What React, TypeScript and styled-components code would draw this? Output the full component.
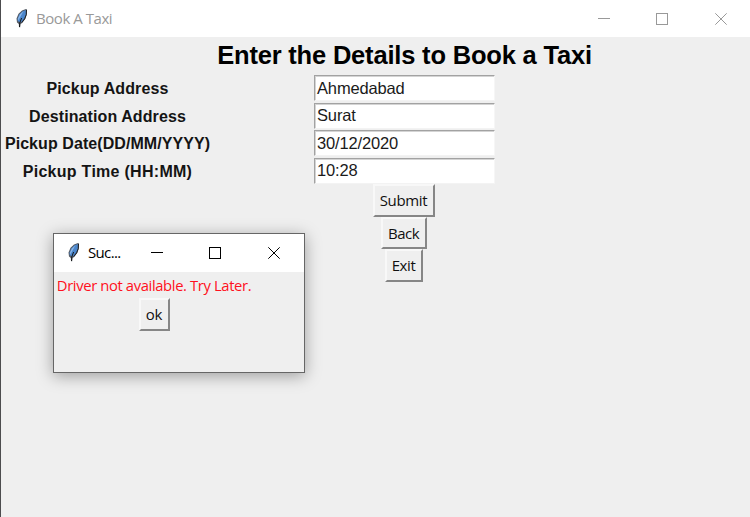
import React from "react";
import styled, { createGlobalStyle } from "styled-components";

const GlobalStyle = createGlobalStyle`
  * { box-sizing: border-box; }
  html, body { margin: 0; padding: 0; overflow: hidden; background: #efefef; }
`;

const arial = `"Liberation Sans", Arial, sans-serif`;
const ui = `"Open Sans", "Noto Sans", sans-serif`;

const Window = styled.main`
  position: relative;
  width: 750px;
  height: 517px;
  border-left: 1px solid #4c4c4e;
  background: #efefef;
`;

const TitleBar = styled.header<{ $height: number; $active?: boolean }>`
  display: flex;
  align-items: center;
  height: ${(p) => p.$height}px;
  padding-left: ${(p) => (p.$active ? 11 : 12)}px;
  padding-right: ${(p) => (p.$active ? 24 : 23)}px;
  background: #fff;
  color: ${(p) => (p.$active ? "#000" : "#999")};
`;

const Caption = styled.h1<{ $spacing: number }>`
  flex: 1;
  margin: -2px 0 0 7px;
  font: 400 15px/20px ${ui};
  letter-spacing: ${(p) => p.$spacing}px;
  white-space: nowrap;
`;

const Controls = styled.div`
  display: flex;
  gap: 46px;

  & > :last-child { margin-left: 1px; }
`;

const Glyph = styled.svg`
  display: block;
  width: 12px;
  height: 12px;
`;

const Feather = styled.svg`
  display: block;
  width: 16px;
  height: 20px;
  margin-top: -2px;
`;

const Form = styled.form`
  display: grid;
  grid-template-columns: 213px 381px;
  grid-template-rows: 38px repeat(4, 27.5px) auto;
`;

const Heading = styled.h2`
  grid-column: 2;
  justify-self: center;
  margin: -1px 0 0;
  font: 700 25.5px/38px ${arial};
  letter-spacing: -0.19px;
  color: #000;
  white-space: nowrap;
`;

const Label = styled.label<{ $spacing: number }>`
  grid-column: 1;
  justify-self: center;
  font: 700 16px/27px ${arial};
  letter-spacing: ${(p) => p.$spacing}px;
  color: #141414;
  white-space: nowrap;
`;

const Entry = styled.input`
  grid-column: 2;
  justify-self: center;
  width: 181px;
  height: 26px;
  margin: 0;
  padding: 0 0 0 1px;
  border: 1px solid;
  border-color: #a2a2a2 #f6f6f6 #f3f3f3 #a2a2a2;
  border-radius: 0;
  outline: 0;
  background: #fff;
  box-shadow: inset 1px 1px 0 #d4d4d4;
  font: 400 16.5px/24px ${arial};
  letter-spacing: -0.15px;
  color: #1a1a1a;
  text-indent: 1px;
`;

const Buttons = styled.div`
  grid-column: 2;
  display: flex;
  flex-direction: column;
  align-items: center;
  margin: -1px 2px 0 0;
`;

const Button = styled.button<{ $width: number; $spacing: number }>`
  width: ${(p) => p.$width}px;
  height: 32.7px;
  padding: 0 0 1px;
  border: solid;
  border-width: 2px;
  border-color: #f8f8f8 #868686 #868686 #f8f8f8;
  border-radius: 0;
  background: #efefef;
  font: 400 15px/20px ${ui};
  letter-spacing: ${(p) => p.$spacing}px;
  color: #111;
  white-space: nowrap;
`;

const Dialog = styled.section`
  position: absolute;
  left: 52px;
  top: 233px;
  width: 252px;
  height: 140px;
  border: 1px solid #666;
  background: #efefef;
  box-shadow: 0 3px 15px rgba(0, 0, 0, 0.34);
`;

const DialogBody = styled.div`
  display: flex;
  flex-direction: column;
  align-items: center;
  gap: 1px;
  width: 200px;
  padding-top: 2px;
`;

const Message = styled.p`
  margin: 0;
  font: 400 14.8px/23px ${ui};
  letter-spacing: -0.38px;
  color: #ff1020;
  white-space: nowrap;
`;

function TkFeather() {
  return (
    <Feather viewBox="0 0 16 20" aria-hidden="true">
      <path d="M13 1 14 1.4 13.8 6.6 12.2 11 9.2 15 7.5 16 7.1 19.4 6 19 5.8 16 4 14.4 3.5 10.5 5.5 5.8 9 2.5Z" fill="#555b64" />
      <path d="M12.8 2 12.8 6.4 11.2 10.5 8.2 14.3 6 14 4.5 12.5 4.7 10.2 6.4 6.2 9.6 3.2Z" fill="#4b86cc" />
      <path d="M10.5 3.2 7 6.6 5 10.6 5.3 12.6 7.5 8.4Z" fill="#8db8e8" />
      <path d="M13.5 2 13.3 6.6 11.7 10.8 8.8 14.5" fill="none" stroke="#17191d" strokeWidth=".9" />
      <path d="M8.6 10 6.8 14.8 6.5 19" fill="none" stroke="#151719" strokeWidth="1" />
    </Feather>
  );
}

function WindowControls() {
  return (
    <Controls>
      <Glyph viewBox="0 0 12 12" aria-label="Minimize">
        <path d="M0 5.5H12" stroke="currentColor" />
      </Glyph>
      <Glyph viewBox="0 0 12 12" aria-label="Maximize">
        <rect x=".5" y=".5" width="11" height="11" fill="none" stroke="currentColor" />
      </Glyph>
      <Glyph viewBox="0 0 12 12" aria-label="Close">
        <path d="M.3.3 11.7 11.7M11.7.3.3 11.7" stroke="currentColor" />
      </Glyph>
    </Controls>
  );
}

const fields = [
  { label: "Pickup Address", value: "Ahmedabad", spacing: 0.12 },
  { label: "Destination Address", value: "Surat", spacing: 0.1 },
  { label: "Pickup Date(DD/MM/YYYY)", value: "30/12/2020", spacing: 0.07 },
  { label: "Pickup Time (HH:MM)", value: "10:28", spacing: 0.28 },
];

export default function App() {
  return (
    <>
      <GlobalStyle />
      <Window>
        <TitleBar $height={37}>
          <TkFeather />
          <Caption $spacing={-0.45}>Book A Taxi</Caption>
          <WindowControls />
        </TitleBar>
        <Form>
          <Heading>Enter the Details to Book a Taxi</Heading>
          {fields.map((f, i) => (
            <React.Fragment key={f.label}>
              <Label htmlFor={`field-${i}`} $spacing={f.spacing}>{f.label}</Label>
              <Entry id={`field-${i}`} defaultValue={f.value} />
            </React.Fragment>
          ))}
          <Buttons>
            <Button type="button" $width={62} $spacing={-0.35}>Submit</Button>
            <Button type="button" $width={46} $spacing={-0.5}>Back</Button>
            <Button type="button" $width={38} $spacing={-0.4}>Exit</Button>
          </Buttons>
        </Form>
        <Dialog role="dialog">
          <TitleBar $height={38} $active>
            <TkFeather />
            <Caption $spacing={-0.65}>Suc...</Caption>
            <WindowControls />
          </TitleBar>
          <DialogBody>
            <Message>Driver not available. Try Later.</Message>
            <Button type="button" $width={31} $spacing={-0.2}>ok</Button>
          </DialogBody>
        </Dialog>
      </Window>
    </>
  );
}
